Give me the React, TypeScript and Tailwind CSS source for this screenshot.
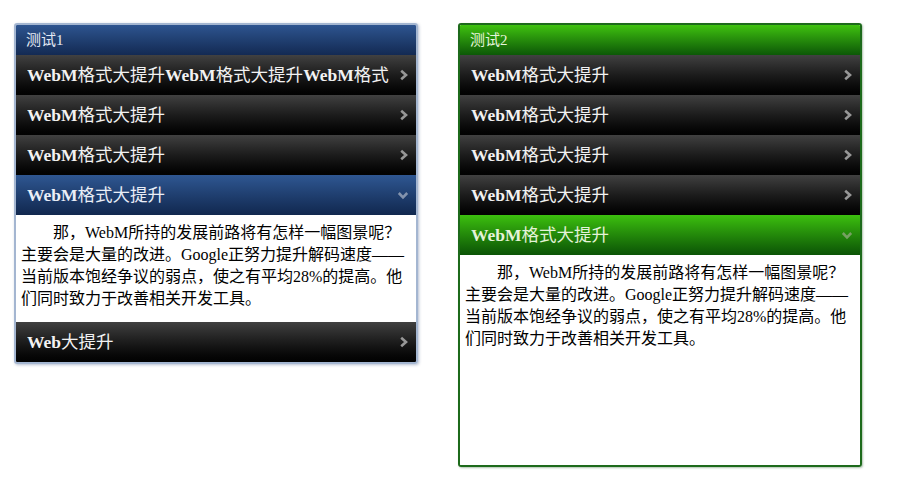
import React from "react";

type Theme = "blue" | "green";

const LATIN = /([A-Za-z]+)/;

function Label({ text }: { text: string }) {
    // Latin runs are bold, CJK stays regular (as the old SimSun rendering does)
    return (
        <>
            {text.split(LATIN).map((part, i) =>
                LATIN.test(part) ? (
                    <b key={i} className="font-bold">{part}</b>
                ) : (
                    <span key={i}>{part}</span>
                )
            )}
        </>
    );
}

function ChevronRight() {
    return (
        <svg width="10" height="12" viewBox="0 0 10 12" className="shrink-0">
            <path d="M2.2 1.8 L7 6 L2.2 10.2" fill="none" stroke="#979797" strokeWidth="2.6" />
        </svg>
    );
}

function ChevronDown({ color }: { color: string }) {
    return (
        <svg width="12" height="9" viewBox="0 0 12 9" className="shrink-0">
            <path d="M1.8 2 L6 6.4 L10.2 2" fill="none" stroke={color} strokeWidth="2.6" />
        </svg>
    );
}

function Item({ text, open, theme }: { text: string; open?: boolean; theme: Theme }) {
    const bg = open
        ? theme === "blue"
            ? "bg-gradient-to-b from-[#2f5792] to-[#11284f] text-[#e9eef7]"
            : "bg-gradient-to-b from-[#3cc00e] to-[#0b5406] text-[#e4f3d8]"
        : "bg-gradient-to-b from-[#414141] via-[#1c1c1c] to-[#020202] text-[#f2f2f2]";
    return (
        <div className={`flex h-[40px] items-center justify-between pl-[11px] pr-[7px] ${bg}`}>
            <span className="min-w-0 truncate text-[17.5px] leading-[24px]">
                <Label text={text} />
            </span>
            {open ? <ChevronDown color={theme === "blue" ? "#8393ad" : "#76a062"} /> : <ChevronRight />}
        </div>
    );
}

function Content({ className = "" }: { className?: string }) {
    return (
        <div className={`bg-white pl-[5px] pr-[4px] pt-[7px] text-[16px] leading-[22px] text-black ${className}`}>
            <p className="indent-[2em]">
                那，WebM所持的发展前路将有怎样一幅图景呢？
                <br />
                主要会是大量的改进。Google正努力提升解码速度——
                <br />
                当前版本饱经争议的弱点，使之有平均28%的提高。他
                <br />
                们同时致力于改善相关开发工具。
            </p>
        </div>
    );
}

function Header({ title, theme }: { title: string; theme: Theme }) {
    const bg =
        theme === "blue"
            ? "bg-gradient-to-b from-[#2e5590] to-[#132a53] text-[#e3e9f4]"
            : "bg-gradient-to-b from-[#3fc20f] to-[#0c5807] text-[#e6f5dc]";
    return (
        <div className={`flex h-[30px] items-center pl-[10px] text-[15px] ${bg}`}>{title}</div>
    );
}

export default function App() {
    return (
        <div
            className="flex h-[502px] w-[918px] items-start gap-[40px] bg-white pl-[14px] pt-[23px]"
            style={{ fontFamily: '"Liberation Serif", "Noto Sans CJK SC", serif' }}
        >
            {/* 测试1 */}
            <div className="w-[404px] overflow-hidden rounded-[3px] border-2 border-[#a4b6d1] shadow-[1px_1px_3px_rgba(90,110,150,0.45)]">
                <Header title="测试1" theme="blue" />
                <Item theme="blue" text="WebM格式大提升WebM格式大提升WebM格式" />
                <Item theme="blue" text="WebM格式大提升" />
                <Item theme="blue" text="WebM格式大提升" />
                <Item theme="blue" open text="WebM格式大提升" />
                <Content className="h-[107px]" />
                <Item theme="blue" text="Web大提升" />
            </div>

            {/* 测试2 */}
            <div className="w-[404px] overflow-hidden rounded-[3px] border-2 border-[#1d6a1b] shadow-[1px_1px_2px_rgba(20,80,20,0.35)]">
                <Header title="测试2" theme="green" />
                <Item theme="green" text="WebM格式大提升" />
                <Item theme="green" text="WebM格式大提升" />
                <Item theme="green" text="WebM格式大提升" />
                <Item theme="green" text="WebM格式大提升" />
                <Item theme="green" open text="WebM格式大提升" />
                <Content className="h-[210px]" />
            </div>
        </div>
    );
}
